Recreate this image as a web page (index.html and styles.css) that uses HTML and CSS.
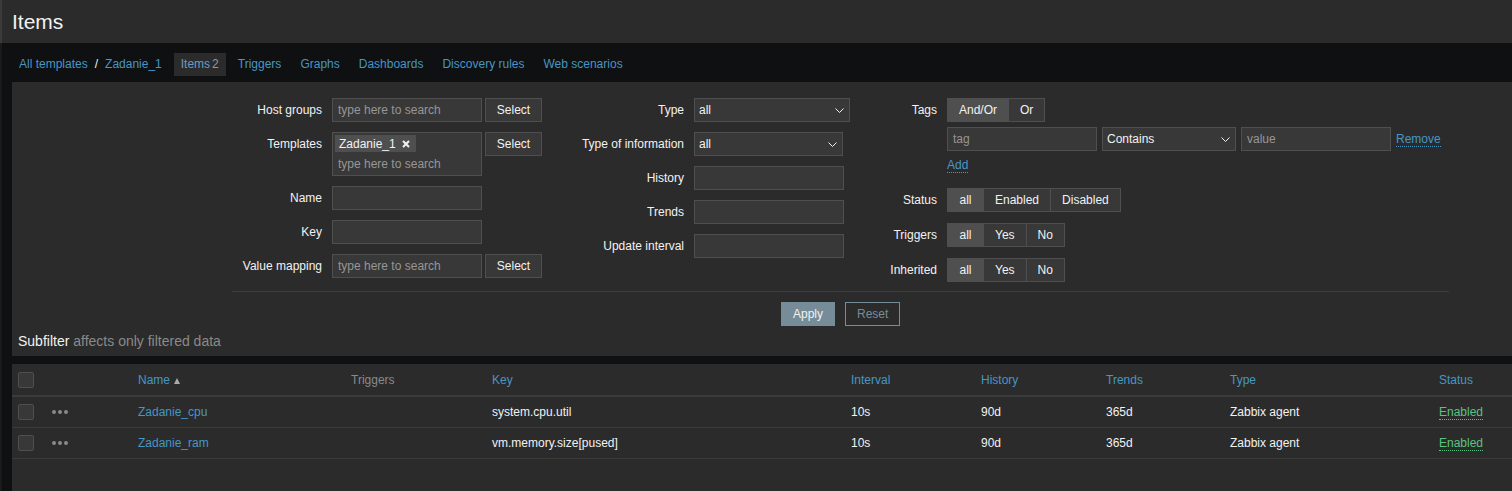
FILE: index.html
```html
<!DOCTYPE html>
<html lang="en">
<head>
<meta charset="utf-8">
<title>Items</title>
<link rel="stylesheet" href="styles.css">
</head>
<body>
<div class="layout">
  <div class="edge"><div class="edge-top"></div></div>
  <div class="main">
    <header class="page-header"><h1>Items</h1></header>

    <nav class="nav">
      <a class="crumb first">All templates</a>
      <span class="crumb-sep">/</span>
      <a class="crumb">Zadanie_1</a>
      <ul class="tabs">
        <li class="tab selected"><a>Items<span class="count">2</span></a></li>
        <li class="tab"><a>Triggers</a></li>
        <li class="tab"><a>Graphs</a></li>
        <li class="tab"><a>Dashboards</a></li>
        <li class="tab"><a>Discovery rules</a></li>
        <li class="tab"><a>Web scenarios</a></li>
      </ul>
    </nav>

    <section class="filter">
      <div class="filter-form">
        <div class="columns">
          <div class="col col1">
            <label class="lbl">Host groups</label>
            <div class="field-btn">
              <div class="input ph">type here to search</div>
              <button class="btn-alt">Select</button>
            </div>

            <label class="lbl">Templates</label>
            <div class="field-btn">
              <div class="multiselect">
                <span class="chip">Zadanie_1<svg width="8" height="8" viewBox="0 0 8 8"><path d="M1 1L7 7M7 1L1 7" stroke="#f2f2f2" stroke-width="2"/></svg></span>
                <div class="ms-ph">type here to search</div>
              </div>
              <button class="btn-alt">Select</button>
            </div>

            <label class="lbl">Name</label>
            <div class="input"></div>

            <label class="lbl">Key</label>
            <div class="input"></div>

            <label class="lbl">Value mapping</label>
            <div class="field-btn">
              <div class="input ph">type here to search</div>
              <button class="btn-alt">Select</button>
            </div>
          </div>

          <div class="col col2">
            <label class="lbl">Type</label>
            <div class="select w156"><span>all</span><svg width="9" height="5" viewBox="0 0 9 5"><path d="M0.5 0.5L4.5 4.5L8.5 0.5" fill="none" stroke="#f2f2f2" stroke-width="1"/></svg></div>

            <label class="lbl">Type of information</label>
            <div class="select w149"><span>all</span><svg width="9" height="5" viewBox="0 0 9 5"><path d="M0.5 0.5L4.5 4.5L8.5 0.5" fill="none" stroke="#f2f2f2" stroke-width="1"/></svg></div>

            <label class="lbl">History</label>
            <div class="input"></div>

            <label class="lbl">Trends</label>
            <div class="input"></div>

            <label class="lbl">Update interval</label>
            <div class="input"></div>
          </div>

          <div class="col col3">
            <label class="lbl">Tags</label>
            <div class="tags-field">
              <div class="seg">
                <span class="seg-btn on">And/Or</span><span class="seg-btn">Or</span>
              </div>
              <div class="tag-row">
                <div class="input ph">tag</div>
                <div class="select w134"><span>Contains</span><svg width="9" height="5" viewBox="0 0 9 5"><path d="M0.5 0.5L4.5 4.5L8.5 0.5" fill="none" stroke="#f2f2f2" stroke-width="1"/></svg></div>
                <div class="input ph">value</div>
                <a class="dotted">Remove</a>
              </div>
              <div class="add-row"><a class="dotted">Add</a></div>
            </div>

            <label class="lbl">Status</label>
            <div class="seg">
              <span class="seg-btn on all">all</span><span class="seg-btn">Enabled</span><span class="seg-btn">Disabled</span>
            </div>

            <label class="lbl">Triggers</label>
            <div class="seg">
              <span class="seg-btn on all">all</span><span class="seg-btn">Yes</span><span class="seg-btn">No</span>
            </div>

            <label class="lbl">Inherited</label>
            <div class="seg">
              <span class="seg-btn on all">all</span><span class="seg-btn">Yes</span><span class="seg-btn">No</span>
            </div>
          </div>
        </div>

        <div class="filter-actions">
          <button class="btn-apply">Apply</button>
          <button class="btn-reset">Reset</button>
        </div>
      </div>
      <div class="subfilter"><span class="sf-title">Subfilter</span> <span class="sf-note">affects only filtered data</span></div>
    </section>

    <section class="list">
      <table class="items">
        <thead>
          <tr>
            <th class="c-cb"><span class="checkbox"></span></th>
            <th class="c-act"></th>
            <th class="c-name"><a>Name</a><span class="arrow-up"></span></th>
            <th class="c-trig muted">Triggers</th>
            <th class="c-key"><a>Key</a></th>
            <th class="c-int"><a>Interval</a></th>
            <th class="c-hist"><a>History</a></th>
            <th class="c-trend"><a>Trends</a></th>
            <th class="c-type"><a>Type</a></th>
            <th class="c-status"><a>Status</a></th>
          </tr>
        </thead>
        <tbody>
          <tr>
            <td><span class="checkbox"></span></td>
            <td><span class="dots"><i></i><i></i><i></i></span></td>
            <td><a>Zadanie_cpu</a></td>
            <td></td>
            <td>system.cpu.util</td>
            <td>10s</td>
            <td>90d</td>
            <td>365d</td>
            <td>Zabbix agent</td>
            <td><a class="green">Enabled</a></td>
          </tr>
          <tr>
            <td><span class="checkbox"></span></td>
            <td><span class="dots"><i></i><i></i><i></i></span></td>
            <td><a>Zadanie_ram</a></td>
            <td></td>
            <td>vm.memory.size[pused]</td>
            <td>10s</td>
            <td>90d</td>
            <td>365d</td>
            <td>Zabbix agent</td>
            <td><a class="green">Enabled</a></td>
          </tr>
        </tbody>
      </table>
    </section>
  </div>
</div>
</body>
</html>
```

FILE: styles.css
```css
* { box-sizing: border-box; }

html, body {
  margin: 0;
  height: 100%;
}

body {
  background: #0e1012;
  color: #f2f2f2;
  font-family: "Liberation Sans", Arial, sans-serif;
  font-size: 12px;
  overflow: hidden;
}

a { color: #4796c4; text-decoration: none; }

.layout {
  display: flex;
  height: 491px;
}

.edge {
  width: 2px;
  flex: none;
  background: #1a1a1a;
}
.edge-top {
  height: 43px;
  background: #3a3a3a;
}

.main {
  flex: 1;
  min-width: 0;
  display: flex;
  flex-direction: column;
}

/* header */
.page-header {
  height: 43px;
  background: #2b2b2b;
  padding-left: 10px;
  display: flex;
  align-items: center;
}
.page-header h1 {
  margin: 0;
  font-size: 21px;
  font-weight: normal;
  line-height: 1;
  color: #f2f2f2;
}

/* navigation */
.nav {
  height: 39px;
  display: flex;
  align-items: center;
  padding-left: 10px;
  padding-top: 3px;
}
.crumb.first { margin-left: 7px; }
.crumb-sep {
  margin: 0 7px;
  color: #f2f2f2;
}
.tabs {
  list-style: none;
  margin: 0 0 0 12px;
  padding: 0;
  display: flex;
  gap: 5px;
}
.tab a {
  display: block;
  height: 23px;
  line-height: 23px;
  padding: 0 7px;
}
.tab.selected a {
  background: #2b2b2b;
  color: #6c9cbd;
}
.count {
  margin-left: 2px;
  color: #969696;
}

/* filter */
.filter {
  margin-left: 10px;
  height: 274px;
  background: #2b2b2b;
  padding-top: 16px;
}
.filter-form {
  margin-left: 220px;
  width: 1217px;
}
.columns {
  display: flex;
  align-items: flex-start;
  height: 183px;
}
.col {
  display: grid;
  column-gap: 10px;
  row-gap: 10px;
  align-items: start;
  justify-items: start;
}
.col1 { grid-template-columns: 90px auto; }
.col2 { grid-template-columns: 122px auto; margin-left: 20px; }
.col3 { grid-template-columns: 67px auto; margin-left: 20px; row-gap: 11px; }

.lbl {
  line-height: 24px;
  text-align: right;
  white-space: nowrap;
  justify-self: stretch;
}

.input {
  width: 150px;
  height: 24px;
  line-height: 22px;
  background: #383838;
  border: 1px solid #4f4f4f;
  padding: 0 5px;
}
.ph { color: #969696; }

.field-btn {
  display: flex;
  gap: 3px;
  align-items: flex-start;
}

.btn-alt {
  width: 57px;
  height: 24px;
  background: #383838;
  border: 1px solid #4f4f4f;
  color: #f2f2f2;
  font: inherit;
  padding: 0;
}

.multiselect {
  width: 150px;
  height: 44px;
  background: #383838;
  border: 1px solid #4f4f4f;
  padding: 2px;
}
.chip {
  display: inline-flex;
  align-items: center;
  gap: 6px;
  height: 17px;
  padding: 0 6px 0 4px;
  background: #4f4f4f;
  margin-bottom: 2px;
}
.ms-ph {
  line-height: 19px;
  padding-left: 3px;
  padding-top: 1px;
  color: #969696;
}

.select {
  height: 24px;
  background: #383838;
  border: 1px solid #4f4f4f;
  padding: 0 5px 0 4px;
  display: flex;
  align-items: center;
  justify-content: space-between;
}
.w156 { width: 156px; }
.w149 { width: 149px; }
.w134 { width: 134px; }

/* tags */
.tags-field {
  display: flex;
  flex-direction: column;
  align-items: flex-start;
}
.tag-row {
  display: flex;
  align-items: center;
  gap: 5px;
  margin-top: 5px;
}
.add-row {
  margin-top: 4px;
  height: 22px;
  line-height: 20px;
}
.dotted {
  border-bottom: 1px dotted #4796c4;
}

.seg {
  display: inline-flex;
  height: 24px;
  border: 1px solid #4f4f4f;
  background: #383838;
}
.seg-btn {
  line-height: 22px;
  padding: 0 11px;
  text-align: center;
}
.seg-btn + .seg-btn { border-left: 1px solid #4f4f4f; }
.seg-btn.on { background: #4f4f4f; }
.seg-btn.all { min-width: 35px; }

/* actions */
.filter-actions {
  margin-top: 10px;
  border-top: 1px solid #3d3d3d;
  padding-top: 10px;
  display: flex;
  justify-content: center;
  gap: 10px;
}
.btn-apply, .btn-reset {
  height: 24px;
  font: inherit;
  padding: 0 11px;
}
.btn-apply {
  background: #768d99;
  border: 1px solid #768d99;
  color: #f2f2f2;
  width: 54px;
}
.btn-reset {
  background: transparent;
  border: 1px solid #768d99;
  color: #768d99;
  width: 55px;
}

.subfilter {
  margin-top: 7px;
  padding-left: 6px;
  font-size: 14px;
  line-height: 16px;
}
.sf-note { color: #8a8a8a; }

/* list */
.list {
  margin-left: 10px;
  margin-top: 8px;
  flex: 1;
  background: #2b2b2b;
}
.items {
  width: 1500px;
  border-collapse: collapse;
  table-layout: fixed;
}
.items th, .items td {
  padding: 0 6px;
  text-align: left;
  font-weight: normal;
  white-space: nowrap;
  vertical-align: middle;
}
.items th {
  height: 32px;
  border-bottom: 2px solid #3b3b3b;
}
.items td {
  height: 31px;
  border-bottom: 1px solid #3b3b3b;
}
.items th.muted { color: #8a8a8a; }

.c-cb { width: 34px; }
.c-act { width: 86px; }
.c-name { width: 213px; }
.c-trig { width: 141px; }
.c-key { width: 359px; }
.c-int { width: 130px; }
.c-hist { width: 125px; }
.c-trend { width: 124px; }
.c-type { width: 209px; }
.c-status { width: 79px; }

.checkbox {
  display: block;
  width: 16px;
  height: 16px;
  background: #383838;
  border: 1px solid #4f4f4f;
  border-radius: 2px;
}

.arrow-up {
  display: inline-block;
  margin-left: 4px;
  width: 0;
  height: 0;
  border-left: 3.5px solid transparent;
  border-right: 3.5px solid transparent;
  border-bottom: 6px solid #aaaaaa;
  vertical-align: 0;
}

.dots {
  display: flex;
  gap: 2px;
}
.dots i {
  width: 4px;
  height: 4px;
  border-radius: 50%;
  background: #8a8a8a;
  display: block;
}

.green {
  color: #59c47f;
  border-bottom: 1px dotted #59c47f;
}
```
